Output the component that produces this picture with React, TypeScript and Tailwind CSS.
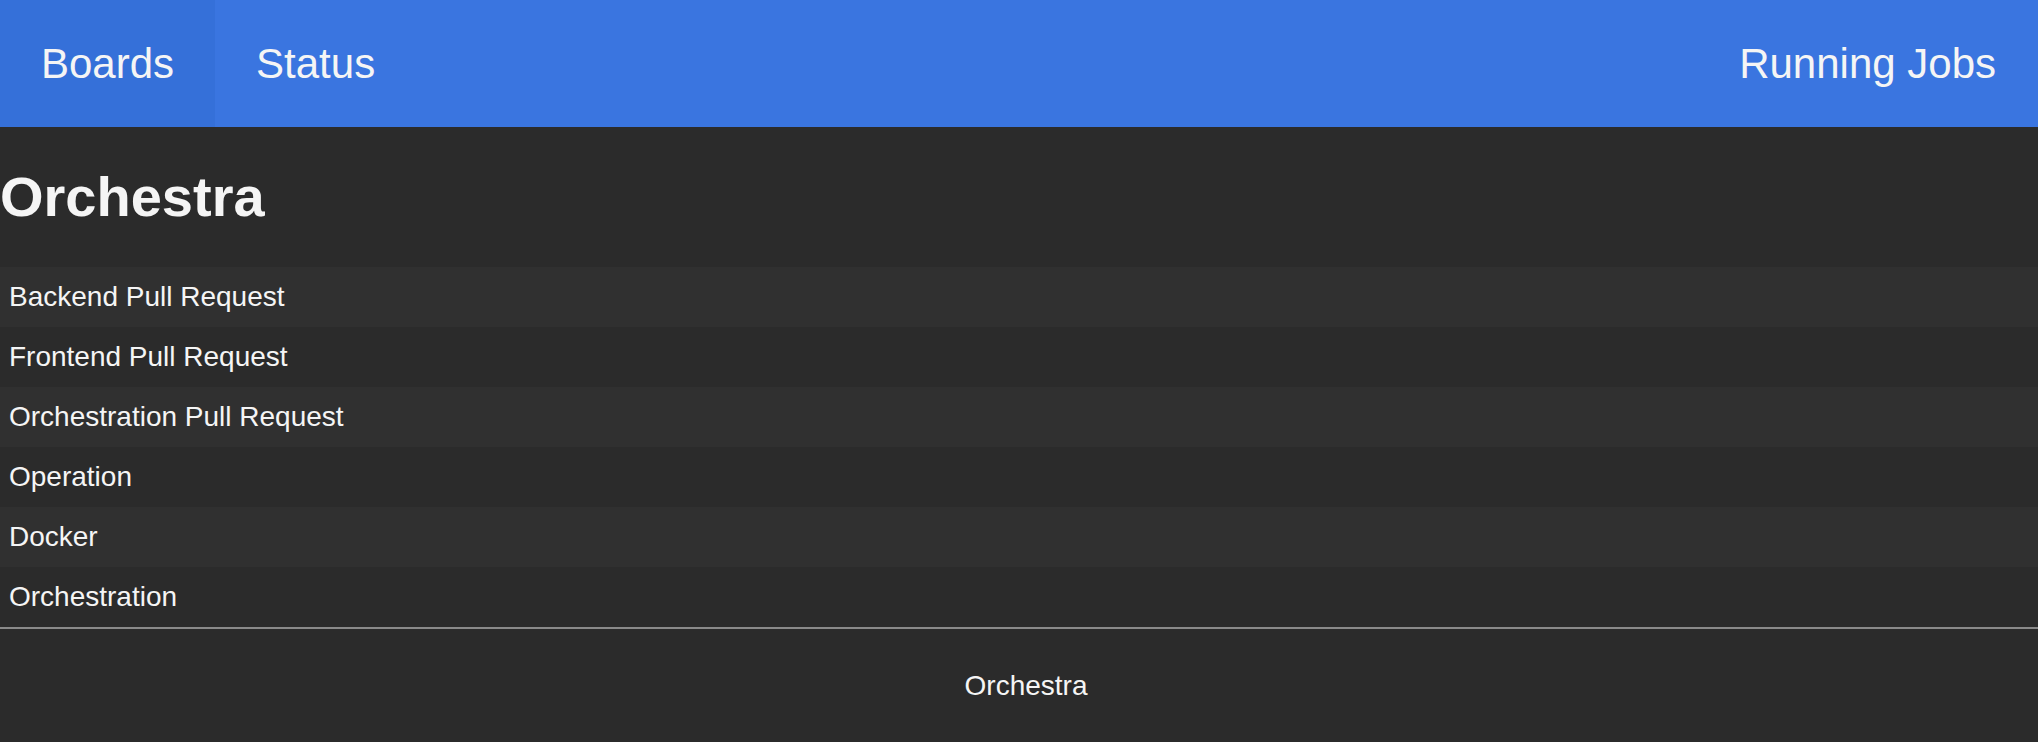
import React from "react";

const boards = [
  "Backend Pull Request",
  "Frontend Pull Request",
  "Orchestration Pull Request",
  "Operation",
  "Docker",
  "Orchestration",
];

export default function App() {
  return (
    <div
      className="min-h-[742px] bg-[#2b2b2b] text-[#f5f5f5]"
      style={{ fontFamily: '"Liberation Sans", Arial, Helvetica, sans-serif' }}
    >
      <nav className="flex h-[127px] items-stretch bg-[#3a75e0] text-[42px]">
        <a className="flex items-center bg-[#3570d9] px-[41px]">Boards</a>
        <a className="flex items-center px-[41px]">Status</a>
        <div className="flex-1" />
        <a className="flex items-center px-[42px]">Running Jobs</a>
      </nav>
      <div className="flex h-[140px] items-center">
        <h1 className="m-0 text-[56px] font-bold leading-none">Orchestra</h1>
      </div>
      <div className="flex flex-col">
        {boards.map((b, i) => (
          <div
            key={b}
            className={
              "flex h-[60px] items-center px-[9px] text-[28px] " +
              (i % 2 === 0 ? "bg-[#303030]" : "bg-[#2b2b2b]")
            }
          >
            {b}
          </div>
        ))}
      </div>
      <div className="h-[2px] bg-[#8a8a8a]" />
      <footer className="flex h-[113px] items-center justify-center pl-[14px] text-[28px]">
        Orchestra
      </footer>
    </div>
  );
}
